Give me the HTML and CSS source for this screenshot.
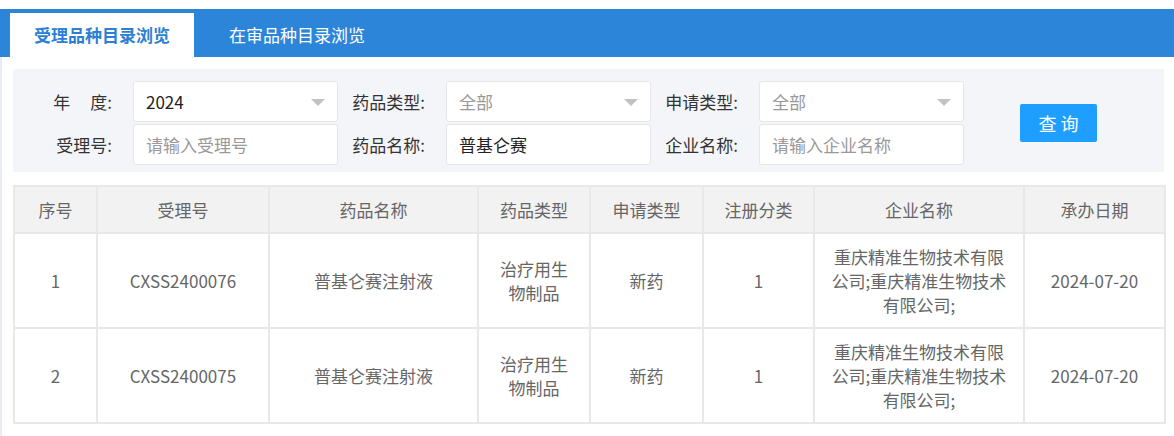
FILE: index.html
```html
<!DOCTYPE html>
<html lang="zh-CN">
<head>
<meta charset="utf-8">
<title>受理品种目录浏览</title>
<link rel="stylesheet" href="styles.css">
</head>
<body>
<div class="tabbar">
  <div class="tab active">受理品种目录浏览</div>
  <div class="tab">在审品种目录浏览</div>
</div>
<div class="content">
  <div class="filter">
    <div class="fields">
      <label class="lbl">年<span class="sp"></span>度:</label>
      <div class="box select"><span class="val">2024</span><i class="caret"></i></div>
      <label class="lbl">药品类型:</label>
      <div class="box select"><span class="ph">全部</span><i class="caret"></i></div>
      <label class="lbl">申请类型:</label>
      <div class="box select"><span class="ph">全部</span><i class="caret"></i></div>

      <label class="lbl">受理号:</label>
      <div class="box"><span class="ph">请输入受理号</span></div>
      <label class="lbl">药品名称:</label>
      <div class="box"><span class="val">普基仑赛</span></div>
      <label class="lbl">企业名称:</label>
      <div class="box"><span class="ph">请输入企业名称</span></div>
    </div>
    <button class="btn">查询</button>
  </div>

  <table class="grid">
    <colgroup>
      <col class="c1"><col class="c2"><col class="c3"><col class="c4">
      <col class="c5"><col class="c6"><col class="c7"><col class="c8">
    </colgroup>
    <thead>
      <tr>
        <th>序号</th><th>受理号</th><th>药品名称</th><th>药品类型</th>
        <th>申请类型</th><th>注册分类</th><th>企业名称</th><th>承办日期</th>
      </tr>
    </thead>
    <tbody>
      <tr>
        <td>1</td><td>CXSS2400076</td><td>普基仑赛注射液</td><td>治疗用生物制品</td>
        <td>新药</td><td>1</td><td>重庆精准生物技术有限公司;重庆精准生物技术有限公司;</td><td>2024-07-20</td>
      </tr>
      <tr>
        <td>2</td><td>CXSS2400075</td><td>普基仑赛注射液</td><td>治疗用生物制品</td>
        <td>新药</td><td>1</td><td>重庆精准生物技术有限公司;重庆精准生物技术有限公司;</td><td>2024-07-20</td>
      </tr>
    </tbody>
  </table>
</div>
</body>
</html>
```

FILE: styles.css
```css
* { box-sizing: border-box; }
html, body {
  margin: 0;
  padding: 0;
  background: #fff;
  font-family: "Noto Sans CJK SC", "Noto Sans", sans-serif;
  font-size: 17px;
  color: #333;
}
.tabbar {
  margin-top: 9px;
  height: 48px;
  background: #2c85d9;
  display: flex;
  align-items: flex-end;
  padding-left: 10px;
  gap: 11px;
}
.tab {
  height: 44px;
  line-height: 44px;
  padding: 0 24px;
  color: #fff;
  font-size: 17px;
}
.tab.active {
  background: #fff;
  color: #2d7fd3;
  font-weight: bold;
}
.content {
  border-left: 2px solid #e8edf4;
  padding: 12px 10px 14px 11px;
  min-height: 379px;
}
.filter {
  background: #f4f5f9;
  padding: 12px 0 7px 24px;
  display: flex;
  align-items: center;
}
.fields {
  display: grid;
  grid-template-columns: 96px 205px 108px 205px 108px 205px;
  row-gap: 2px;
}
.lbl {
  text-align: right;
  padding-right: 21px;
  line-height: 41px;
  color: #333;
  white-space: nowrap;
}
.sp {
  display: inline-block;
  width: 20px;
}
.box {
  height: 41px;
  background: #fff;
  border: 1px solid #e6e6e6;
  border-radius: 3px;
  padding-left: 12px;
  display: flex;
  align-items: center;
  position: relative;
}
.val { color: #222; }
.ph { color: #999; }
.caret {
  position: absolute;
  right: 12px;
  top: 17px;
  width: 0;
  height: 0;
  border-left: 7px solid transparent;
  border-right: 7px solid transparent;
  border-top: 7px solid #c2c2c2;
}
.btn {
  margin-left: 56px;
  width: 77px;
  height: 38px;
  border: none;
  border-radius: 2px;
  background: #1e9fff;
  color: #fff;
  font-family: inherit;
  font-size: 18px;
  letter-spacing: 4px;
  padding: 0 0 0 4px;
}
.grid {
  margin-top: 13px;
  width: 1151px;
  border-collapse: collapse;
  table-layout: fixed;
  color: #666;
}
.c1 { width: 83px; }
.c2 { width: 172px; }
.c3 { width: 209px; }
.c4 { width: 112px; }
.c5 { width: 113px; }
.c6 { width: 111px; }
.c7 { width: 210px; }
.c8 { width: 141px; }
.grid th, .grid td {
  border: 2px solid #e8e8e8;
  text-align: center;
  line-height: 24px;
  padding: 0 14px;
  font-weight: normal;
}
.grid th {
  background: #f2f2f2;
  height: 47px;
}
.grid td {
  height: 95px;
}
```
